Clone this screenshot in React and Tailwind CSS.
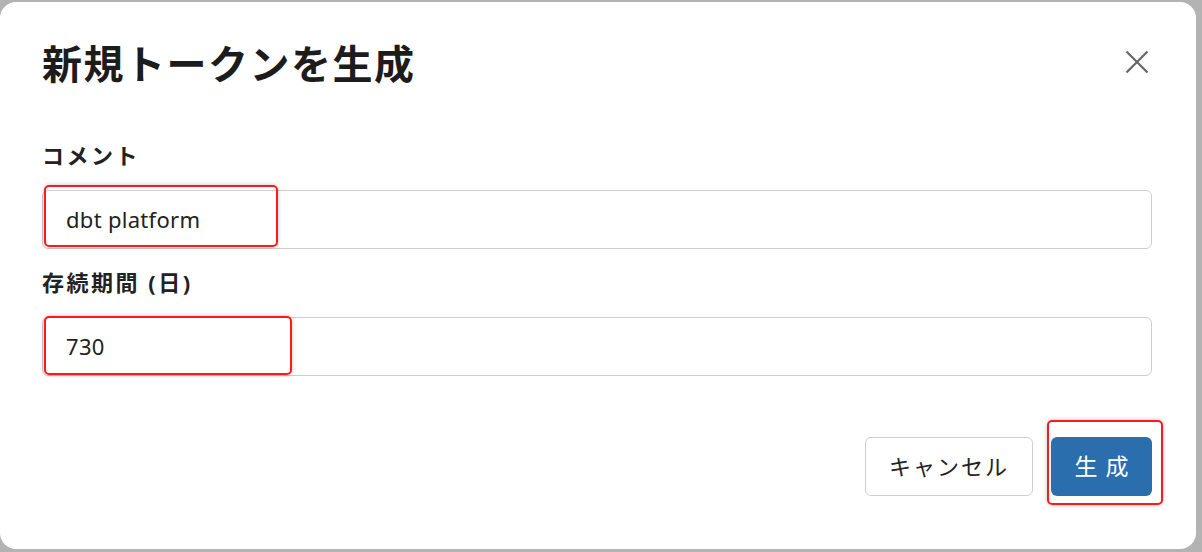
import React from 'react';

const Field = ({ label, value, className = '' }) => (
  <div className={className}>
    <label className="block text-[22px] font-bold text-[#222] leading-none tracking-[2.5px]">{label}</label>
    <div className="mt-[24px] h-[59px] w-[1110px] rounded-[6px] border border-[#cfcfcf] bg-white flex items-center px-[23px]">
      <span className="text-[22px] text-[#222] tracking-[0.3px]">{value}</span>
    </div>
  </div>
);

const Highlight = ({ className }) => (
  <div className={`absolute rounded-[5px] border-2 border-[#ff1a1a] shadow-[0_0_4px_rgba(0,0,0,0.25)] ${className}`} />
);

export default function App() {
  return (
    <div
      className="relative w-[1202px] h-[552px] overflow-hidden bg-[#b3b3b3] pt-[2px]"
      style={{ fontFamily: '"Noto Sans", "Noto Sans CJK JP", sans-serif' }}
    >
      <div className="relative w-[1196px] h-[547px] rounded-[16px] bg-white px-[42px] pt-[36px]">
        <div className="flex items-start justify-between">
          <h1 className="text-[40px] font-bold text-[#1c1c1c] leading-[52px] tracking-[1.5px]">新規トークンを生成</h1>
          <button className="mt-[12px] mr-[5px] text-[#666]">
            <svg width="24" height="24" viewBox="0 0 24 24" fill="none" stroke="currentColor" strokeWidth="2.2">
              <path d="M1.5 1.5L22.5 22.5M22.5 1.5L1.5 22.5" />
            </svg>
          </button>
        </div>

        <Field label="コメント" value="dbt platform" className="mt-[54px]" />
        <Field label="存続期間 (日)" value="730" className="mt-[22px]" />

        <div className="mt-[61px] flex justify-end gap-[18px] pr-[2px]">
          <button className="h-[59px] w-[168px] rounded-[6px] border border-[#cfcfcf] bg-white text-[22px] text-[#222] tracking-[2px]">
            キャンセル
          </button>
          <button className="h-[59px] w-[101px] rounded-[6px] bg-[#2a6eae] text-[23px] text-white tracking-[8px] pl-[8px]">
            生成
          </button>
        </div>

        <Highlight className="left-[44px] top-[183px] w-[234px] h-[62px]" />
        <Highlight className="left-[44px] top-[314px] w-[248px] h-[59px]" />
        <Highlight className="left-[1047px] top-[418px] w-[116px] h-[85px]" />
      </div>
    </div>
  );
}
